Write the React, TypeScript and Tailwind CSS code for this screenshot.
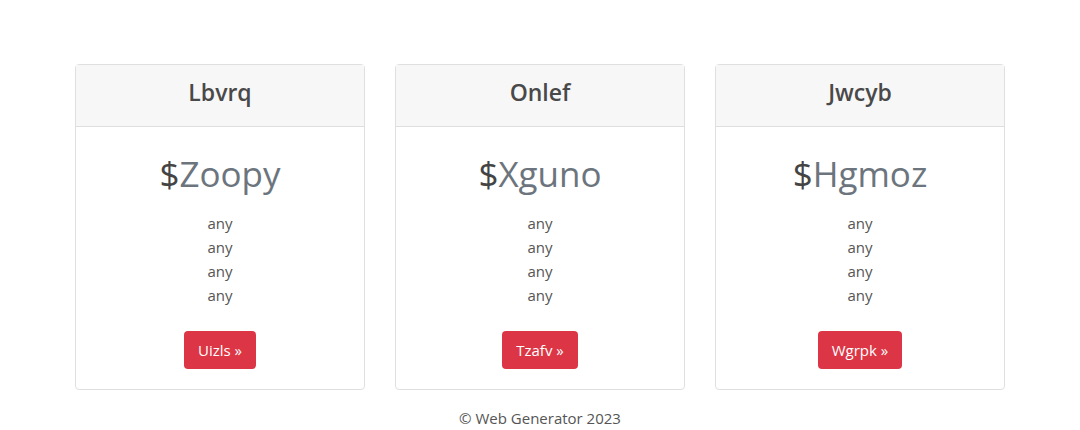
const plans = [
  { name: "Lbvrq", price: "Zoopy", cta: "Uizls" },
  { name: "Onlef", price: "Xguno", cta: "Tzafv" },
  { name: "Jwcyb", price: "Hgmoz", cta: "Wgrpk" },
]

export default function App() {
  return (
    <div className="min-h-[430px] bg-white font-['Open_Sans',sans-serif] text-[#212529]">
      <div className="mx-auto w-[960px] px-[15px] pt-16">
        <div className="grid grid-cols-3 gap-[30px]">
          {plans.map((p) => (
            <div key={p.name} className="flex flex-col rounded border border-[#dfdfdf] text-center">
              <div className="flex h-[62px] items-center justify-center border-b border-[#dfdfdf] bg-[#f7f7f7] pb-[6px]">
                <h4 className="text-[23px] font-semibold text-[#494949]">{p.name}</h4>
              </div>
              <div className="px-5 pt-5 pb-5">
                <h1 className="mt-[3px] text-[35px] leading-[48px] text-[#6c757d]">
                  <span className="text-[#444]">$</span>
                  {p.price}
                </h1>
                <ul className="mt-[13px] mb-6 text-[15px] leading-6 text-[#555]">
                  <li>any</li>
                  <li>any</li>
                  <li>any</li>
                  <li>any</li>
                </ul>
                <button className="h-[38px] rounded bg-[#dc3545] px-[14px] text-[15px] text-white">
                  {p.cta} »
                </button>
              </div>
            </div>
          ))}
        </div>
        <footer className="pt-[17px] text-center text-[15px] text-[#555]">© Web Generator 2023</footer>
      </div>
    </div>
  )
}
